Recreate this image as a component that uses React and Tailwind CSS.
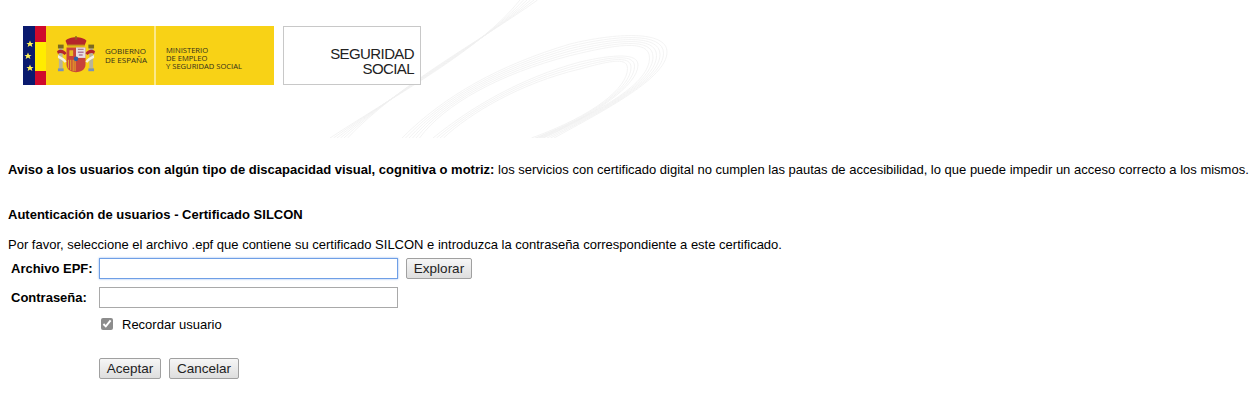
const stripes = [0, 3.5, 7, 10.5, 14, 17.5];

function Swoosh() {
  return (
    <svg className="absolute left-[330px] top-0" width="345" height="138" viewBox="0 0 345 138" fill="none" stroke="#f0f0f0" strokeWidth="0.8">
      {stripes.map((d) => (
        <path key={`a${d}`} d={`M${d} 138C70 ${92 - d / 2} 150 ${50 - d / 2} ${190 + d} 0`} />
      ))}
      {stripes.map((d) => (
        <path key={`b${d}`} d={`M${72 + d} 138C115 ${95 + d / 2} 170 ${65 + d / 2} 240 ${44 + d / 1.5}C285 ${33 + d / 1.5} ${337 - d} ${30 + d / 2} ${337 - d} ${52 + d / 3}C${337 - d} ${78 + d / 4} 275 110 ${224 - d} 138`} />
      ))}
      {stripes.slice(0, 4).map((d) => (
        <path key={`c${d}`} d={`M${103 + d} 138C140 ${108 + d / 2} 190 ${78 + d / 2} 250 ${62 + d / 1.5}C285 ${54 + d / 2} ${308 - d} ${53 + d / 2} ${308 - d} ${65 + d / 3}C${308 - d} ${85 + d / 4} 265 115 ${212 - d} 138`} />
      ))}
    </svg>
  );
}

function Star({ x, y }) {
  return <path transform={`translate(${x} ${y}) scale(3.6)`} d="M0-1 .29-.31 1-.31 .45.12 .65.81 0 .4-.65.81-.45.12-1-.31-.29-.31Z" fill="#fff35a" />;
}

function Coat() {
  return (
    <svg className="shrink-0" width="38" height="40" viewBox="0 0 40 42">
      <rect x="2" y="12" width="4" height="22" fill="#b9b49a" />
      <rect x="34" y="12" width="4" height="22" fill="#b9b49a" />
      <rect x="1" y="9" width="6" height="4" fill="#7c6a1f" />
      <rect x="33" y="9" width="6" height="4" fill="#7c6a1f" />
      <rect x="1" y="34" width="6" height="3" fill="#7b93b5" />
      <rect x="33" y="34" width="6" height="3" fill="#7b93b5" />
      <path d="M9 5C12 0 28 0 31 5L29 10H11Z" fill="#b5262b" />
      <path d="M20 0V4" stroke="#8a6a1a" strokeWidth="1.5" />
      <rect x="11" y="9" width="18" height="2" fill="#c79a1e" />
      <path d="M10 12H30V30C30 36 24 38 20 38C16 38 10 36 10 30Z" fill="#c8443a" />
      <rect x="20" y="12" width="10" height="11" fill="#e6dfe3" />
      <path d="M22 14H28M22 17H28M23 20H27" stroke="#b07a9a" strokeWidth="1.5" />
      <rect x="13" y="15" width="4" height="6" fill="#e8b923" />
      <path d="M12 25V34M14.5 25V36M17 25V37M19 25V37" stroke="#e8b923" strokeWidth="1" />
      <circle cx="20" cy="24" r="2.4" fill="#2f5fa5" />
      <path d="M0 16C4 13 8 15 10 18L8 20C6 18 3 17 1 19ZM40 16C36 13 32 15 30 18L32 20C34 18 37 17 39 19Z" fill="#b5262b" />
      <path d="M1 20C6 23 9 24 10 27L8 28C6 25 3 24 1 23ZM39 20C34 23 31 24 30 27L32 28C34 25 37 24 39 23Z" fill="#f5f0e0" />
    </svg>
  );
}

function GovLogo() {
  return (
    <div className="flex h-[59px] w-[251px] bg-[#f8d216] font-['Open_Sans',sans-serif] text-[#332f1c]">
      <svg className="shrink-0" width="23" height="59" viewBox="0 0 23 59">
        <rect width="12" height="59" fill="#0a1a6e" />
        <rect x="12" width="11" height="59" fill="#cf0a2c" />
        <rect x="12" y="16" width="11" height="29" fill="#ffec00" />
        <Star x="7" y="18" />
        <Star x="5" y="30" />
        <Star x="7" y="42" />
      </svg>
      <div className="flex w-[108px] items-center pl-[11px]">
        <Coat />
        <div className="mt-[-1px] ml-[10px] text-[8px] leading-[9px] whitespace-nowrap">
          <div>GOBIERNO</div>
          <div>DE ESPAÑA</div>
        </div>
      </div>
      <div className="flex flex-1 items-center border-l-2 border-[#fbe88a] pl-[10px] text-[7.6px] leading-[8px] whitespace-nowrap">
        <div className="mt-[4px]">
          <div>MINISTERIO</div>
          <div>DE EMPLEO</div>
          <div>Y SEGURIDAD SOCIAL</div>
        </div>
      </div>
    </div>
  );
}

function SsLogo() {
  return (
    <div className="ml-[9px] flex h-[59px] w-[138px] flex-col items-end justify-center border border-[#c8c8c8] bg-white pt-[10px] pr-[6px] font-['Liberation_Sans',sans-serif] text-[15px] leading-[15px] tracking-[-0.6px] text-[#222]">
      <div>SEGURIDAD</div>
      <div>SOCIAL</div>
    </div>
  );
}

const buttonClass =
  "h-[21px] rounded-[2px] border border-[#a0a0a0] bg-gradient-to-b from-[#f6f6f6] to-[#dedede] text-[13.5px] leading-none text-[#222]";
const inputClass = "h-[21px] w-[299px] border bg-white outline-none";

export default function App() {
  return (
    <div className="min-h-[406px] bg-white font-['Liberation_Sans',Arial,sans-serif] text-[13px] text-black">
      <div className="relative h-[138px] overflow-hidden">
        <Swoosh />
        <div className="relative flex pl-[23px] pt-[26px]">
          <GovLogo />
          <SsLogo />
        </div>
      </div>

      <div className="pl-2">
        <p className="mt-[25px] leading-[14px] whitespace-nowrap">
          <b>Aviso a los usuarios con algún tipo de discapacidad visual, cognitiva o motriz:</b> los servicios con certificado digital no cumplen las pautas de accesibilidad, lo que puede impedir un acceso correcto a los mismos.
        </p>
        <h1 className="mt-[31px] leading-[14px] font-bold">Autenticación de usuarios - Certificado SILCON</h1>
        <p className="mt-4 leading-[14px]">
          Por favor, seleccione el archivo .epf que contiene su certificado SILCON e introduzca la contraseña correspondiente a este certificado.
        </p>

        <div className="mt-[6px] flex items-center">
          <label className="w-[91px] pl-[3px] font-bold">Archivo EPF:</label>
          <input type="text" className={`${inputClass} border-[#6f9fe6] shadow-[0_0_2px_#8fb5ee]`} />
          <button type="button" className={`${buttonClass} ml-2 w-[66px]`}>Explorar</button>
        </div>
        <div className="mt-2 flex items-center">
          <label className="w-[91px] pl-[3px] font-bold">Contraseña:</label>
          <input type="password" className={`${inputClass} border-[#a9a9a9]`} />
        </div>
        <label className="mt-[10px] ml-[93px] flex h-[14px] items-center">
          <input type="checkbox" defaultChecked className="mt-[-2px] h-3 w-3 accent-[#8c8c8c]" />
          <span className="ml-[9px]">Recordar usuario</span>
        </label>
        <div className="mt-[26px] ml-[91px] flex gap-2">
          <button type="button" className={`${buttonClass} w-[62px]`}>Aceptar</button>
          <button type="button" className={`${buttonClass} w-[70px]`}>Cancelar</button>
        </div>
      </div>
    </div>
  );
}
